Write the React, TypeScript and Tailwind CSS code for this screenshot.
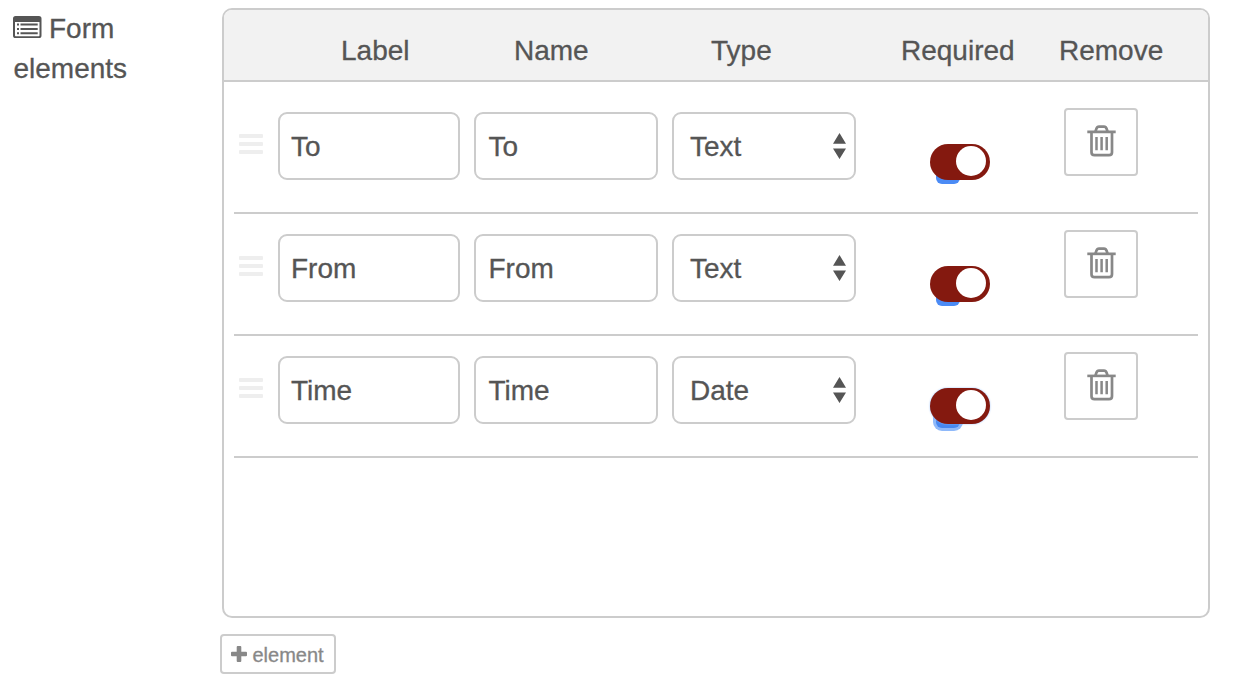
import { useState } from "react";

type Row = { label: string; name: string; type: string; focused?: boolean };

const rows: Row[] = [
  { label: "To", name: "To", type: "Text" },
  { label: "From", name: "From", type: "Text" },
  { label: "Time", name: "Time", type: "Date", focused: true },
];

function ListIcon() {
  return (
    <svg className="h-[22px] w-[28.500px] shrink-0" viewBox="0 0 28.5 22" fill="#555">
      <path
        fillRule="evenodd"
        d="M2.600 0h23.300A2.600 2.600 0 0 1 28.500 2.600v16.800a2.600 2.600 0 0 1-2.600 2.600h-23.300A2.600 2.600 0 0 1 0 19.400v-16.800A2.600 2.600 0 0 1 2.600 0zM2 6v13.500q0 .7.700.7h23.100q.7 0 .7-.7V6z"
      />
      <path d="M4 7.600h2v2H4zM7.500 7.600h17.200v2H7.500zM4 11.900h2v2H4zM7.500 11.900h17.200v2H7.500zM4 16.200h2v2H4zM7.500 16.200h17.200v2H7.500z" />
    </svg>
  );
}

function TrashIcon() {
  return (
    <svg className="h-8 w-[29px]" viewBox="0 0 29 32" fill="none" stroke="#888" strokeWidth="2.700">
      <path d="M0.300 6.900h28.400" strokeWidth="2.600" />
      <path d="M8.500 6.500L9.400 3.700Q10.100 1.700 12 1.700h5Q18.900 1.700 19.600 3.700L20.500 6.500" />
      <path d="M4.500 7v20.200q0 3 3 3h14.500q3 0 3-3V7" />
      <path d="M9.500 12v13.200M14.600 12v13.200M19.700 12v13.200" strokeWidth="2.500" />
    </svg>
  );
}

function Toggle({ focused }: { focused?: boolean }) {
  const [on, setOn] = useState(true);
  return (
    <button
      type="button"
      role="switch"
      aria-checked={on}
      onClick={() => setOn(!on)}
      className="relative ml-[74px] mt-[52px] h-9 w-[60px] outline-none"
    >
      <span
        className={
          focused
            ? "absolute left-1.5 top-4 h-6 w-6 rounded-[6px] bg-[#4787f0] ring-[3px] ring-[#8fb9fa]"
            : "absolute left-1.5 top-4 h-6 w-6 rounded-[6px] bg-[#4b8bf5]"
        }
      />
      <span
        className={
          focused
            ? "relative flex h-9 items-start rounded-full bg-[#84190f] pl-[26px] pt-0.5 shadow-[0_0_2px_#8fb9fa]"
            : "relative flex h-9 items-start rounded-full bg-[#84190f] pl-[26px] pt-0.5"
        }
      >
        <span className="h-[30px] w-[30px] rounded-full bg-white" />
      </span>
    </button>
  );
}

function ElementRow({ row }: { row: Row }) {
  return (
    <div className="flex h-[122px] items-start border-b-2 border-[#ccc] pl-[5px]">
      <div className="mt-[42px] flex w-6 flex-col gap-1">
        <span className="h-1 rounded-[1px] bg-[#eee]" />
        <span className="h-1 rounded-[1px] bg-[#eee]" />
        <span className="h-1 rounded-[1px] bg-[#eee]" />
      </div>
      <div className="ml-[15px] mt-5 flex h-[68px] w-[182px] items-center rounded-[9px] border-2 border-[#ccc] pl-[11px] pt-0.5">
        {row.label}
      </div>
      <div className="ml-3.5 mt-5 flex h-[68px] w-[184px] items-center rounded-[9px] border-2 border-[#ccc] pl-[12.500px] pt-0.5">
        {row.name}
      </div>
      <div className="ml-3.5 mt-5 flex h-[68px] w-[184px] items-center justify-between rounded-[9px] border-2 border-[#ccc] pl-4 pr-2">
        <span className="pt-0.5">{row.type}</span>
        <svg className="h-[26px] w-[13px]" viewBox="0 0 13 26" fill="#555">
          <path d="M6.500 0L13 10.700H0zM6.500 26L13 15.500H0z" />
        </svg>
      </div>
      <Toggle focused={row.focused} />
      <button
        type="button"
        aria-label="Remove"
        className="ml-[74px] mt-4 flex h-[68px] w-[74px] items-start justify-center rounded-[4px] border-2 border-[#ccc] pt-[15px]"
      >
        <TrashIcon />
      </button>
    </div>
  );
}

export default function App() {
  return (
    <div className="flex h-[684px] w-[1238px] bg-white pt-2 font-['Liberation_Sans',Arial,sans-serif] text-[28px] leading-10 text-[#555] [-webkit-text-stroke:0.3px]">
      <div className="w-[220px] pl-[13px] pt-px">
        <div className="flex items-start gap-[7.500px]">
          <div className="flex h-[38px] items-center pb-0.5">
            <ListIcon />
          </div>
          <span>Form</span>
        </div>
        <div className="pl-[0.500px]">elements</div>
      </div>
      <div>
        <div className="ml-0.5 h-[610px] w-[988px] overflow-hidden rounded-[10px] border-2 border-[#ccc]">
          <div className="flex h-[72px] border-b-2 border-[#ccc] bg-[#f2f2f2] pl-[117px] pt-[21px]">
            <div className="w-[173px]">Label</div>
            <div className="w-[197px]">Name</div>
            <div className="w-[190px]">Type</div>
            <div className="w-[158px]">Required</div>
            <div>Remove</div>
          </div>
          <div className="px-2.5 pt-2.5">
            {rows.map((row) => (
              <ElementRow key={row.label} row={row} />
            ))}
          </div>
        </div>
        <button
          type="button"
          className="mt-4 flex h-10 w-[116px] items-center rounded-[4px] border-2 border-[#ccc] pl-[9px] text-[20px] leading-9 text-[#888]"
        >
          <svg className="mr-[5.500px] h-4 w-4 shrink-0" viewBox="0 0 16 16" fill="#888">
            <path d="M6.700 0h2.600q1 0 1 1v4.700H15q1 0 1 1v2.600q0 1-1 1h-4.700V15q0 1-1 1H6.700q-1 0-1-1v-4.700H1q-1 0-1-1V6.700q0-1 1-1h4.700V1q0-1 1-1z" />
          </svg>
          <span className="pt-px">element</span>
        </button>
      </div>
    </div>
  );
}
